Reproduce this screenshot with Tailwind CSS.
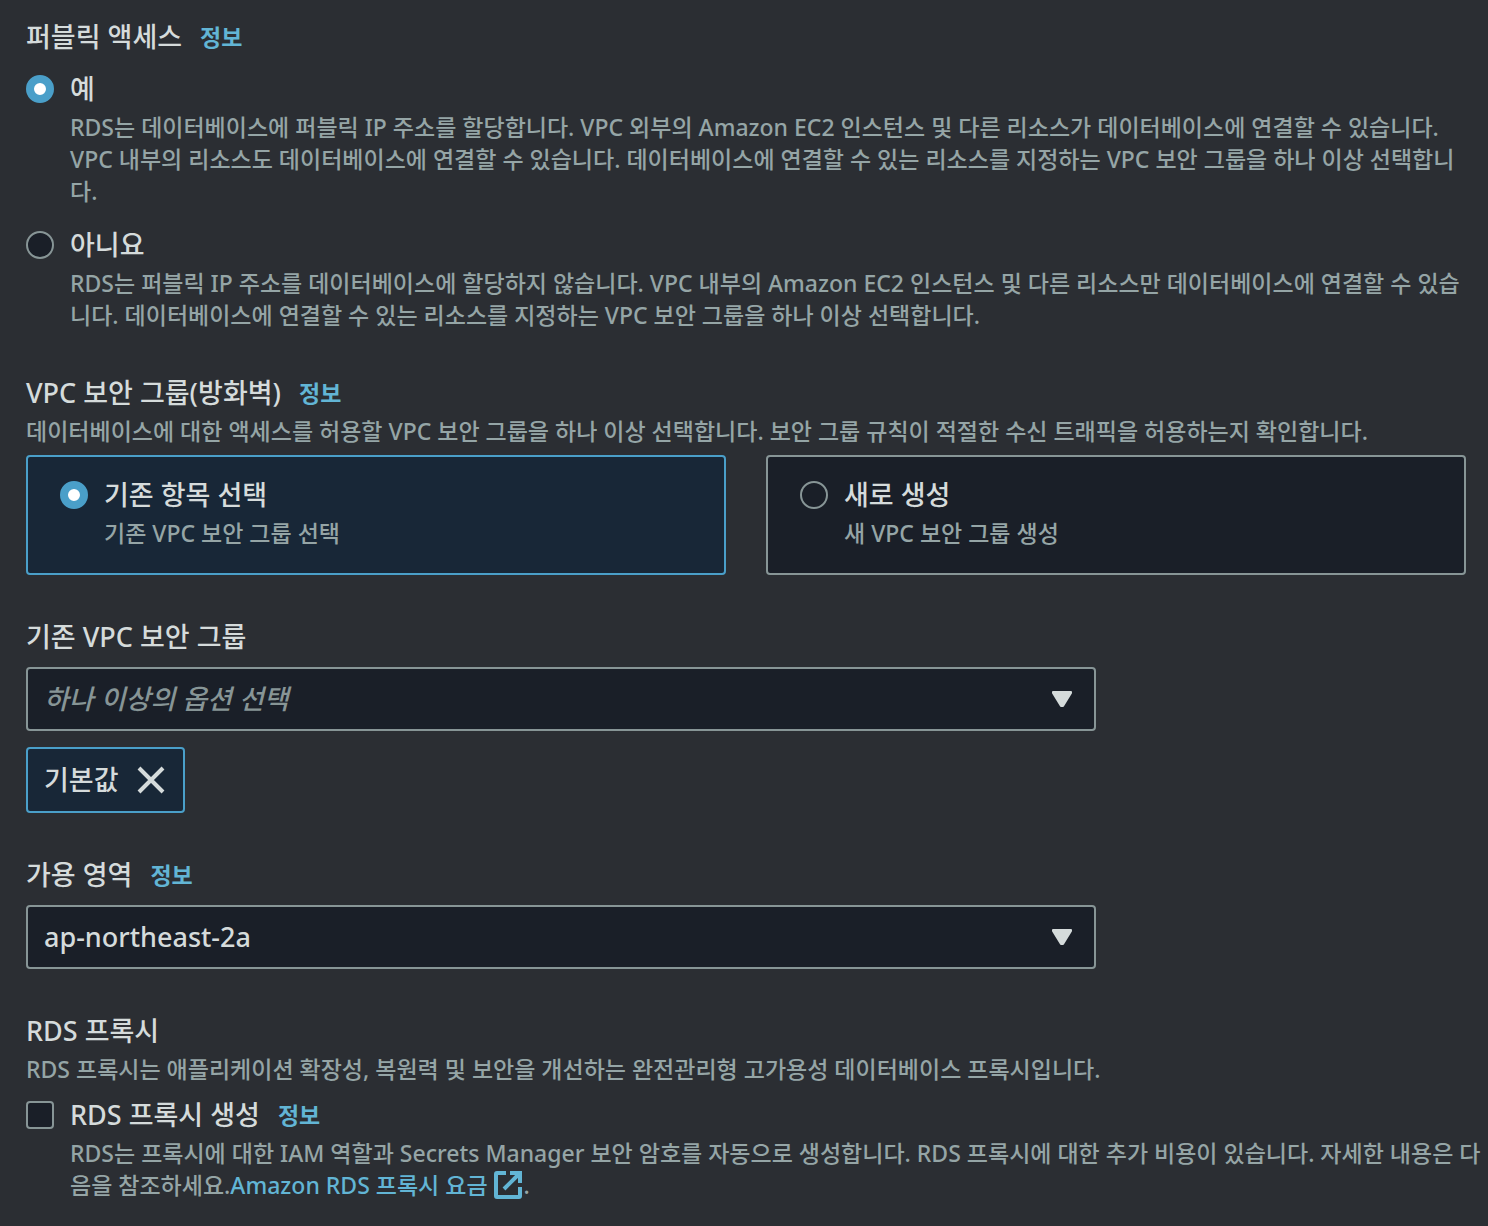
<!DOCTYPE html>
<html lang="ko">
<head>
    <meta charset="UTF-8">
    <meta name="viewport" content="width=device-width, initial-scale=1.0">
    <title>RDS 연결 설정</title>

    <!-- Tailwind CSS -->
    <script src="https://cdn.jsdelivr.net/npm/@tailwindcss/browser@4"></script>
</head>
<body class="bg-[#2b2e33] min-h-screen font-['Noto_Sans','Noto_Sans_CJK_KR',sans-serif] font-medium text-[27px] leading-10 text-[#d5dbdb]">
    <form class="flex flex-col gap-[42px] pt-[17px] pb-6 pl-[26px] pr-[22px]">

        <!-- Public access -->
        <fieldset>
            <legend class="flex items-center gap-[18px]">
                퍼블릭 액세스
                <a href="#" class="text-[23px] font-bold text-[#62b5d5]">정보</a>
            </legend>
            <div class="flex gap-4 mt-3">
                <input type="radio" id="public-yes" name="public-access" checked
                    class="appearance-none shrink-0 size-7 mt-[6px] rounded-full bg-[#1a1f28] border-2 border-[#879596] checked:bg-white checked:border-8 checked:border-[#4a9fc9]">
                <div>
                    <label for="public-yes">예</label>
                    <p class="mt-[2px] text-[23px] leading-8 whitespace-nowrap text-[#95a5a6]">
                        RDS는 데이터베이스에 퍼블릭 IP 주소를 할당합니다. VPC 외부의 Amazon EC2 인스턴스 및 다른 리소스가 데이터베이스에 연결할 수 있습니다.<br>
                        VPC 내부의 리소스도 데이터베이스에 연결할 수 있습니다. 데이터베이스에 연결할 수 있는 리소스를 지정하는 VPC 보안 그룹을 하나 이상 선택합니<br>다.
                    </p>
                </div>
            </div>
            <div class="flex gap-4 mt-[18px]">
                <input type="radio" id="public-no" name="public-access"
                    class="appearance-none shrink-0 size-7 mt-[6px] rounded-full bg-[#1a1f28] border-2 border-[#879596] checked:bg-white checked:border-8 checked:border-[#4a9fc9]">
                <div>
                    <label for="public-no">아니요</label>
                    <p class="mt-[2px] text-[23px] leading-8 whitespace-nowrap text-[#95a5a6]">
                        RDS는 퍼블릭 IP 주소를 데이터베이스에 할당하지 않습니다. VPC 내부의 Amazon EC2 인스턴스 및 다른 리소스만 데이터베이스에 연결할 수 있습<br>니다. 데이터베이스에 연결할 수 있는 리소스를 지정하는 VPC 보안 그룹을 하나 이상 선택합니다.
                    </p>
                </div>
            </div>
        </fieldset>

        <!-- VPC security group -->
        <fieldset>
            <legend class="flex items-center gap-[18px]">
                VPC 보안 그룹(방화벽)
                <a href="#" class="text-[23px] font-bold text-[#62b5d5]">정보</a>
            </legend>
            <p class="mt-[2px] text-[23px] leading-8 text-[#95a5a6]">데이터베이스에 대한 액세스를 허용할 VPC 보안 그룹을 하나 이상 선택합니다. 보안 그룹 규칙이 적절한 수신 트래픽을 허용하는지 확인합니다.</p>
            <div class="grid grid-cols-2 gap-10 mt-2">
                <div class="flex gap-4 pt-[18px] pb-6 px-8 border-2 rounded-sm border-[#4a9fc9] bg-[#182737]">
                    <input type="radio" id="sg-existing" name="sg" checked
                        class="appearance-none shrink-0 size-7 mt-[6px] rounded-full bg-[#1a1f28] border-2 border-[#879596] checked:bg-white checked:border-8 checked:border-[#4a9fc9]">
                    <div>
                        <label for="sg-existing">기존 항목 선택</label>
                        <p class="mt-[2px] text-[23px] leading-8 text-[#95a5a6]">기존 VPC 보안 그룹 선택</p>
                    </div>
                </div>
                <div class="flex gap-4 pt-[18px] pb-6 px-8 border-2 rounded-sm border-[#879596] bg-[#1a1f28]">
                    <input type="radio" id="sg-new" name="sg"
                        class="appearance-none shrink-0 size-7 mt-[6px] rounded-full bg-[#1a1f28] border-2 border-[#879596] checked:bg-white checked:border-8 checked:border-[#4a9fc9]">
                    <div>
                        <label for="sg-new">새로 생성</label>
                        <p class="mt-[2px] text-[23px] leading-8 text-[#95a5a6]">새 VPC 보안 그룹 생성</p>
                    </div>
                </div>
            </div>
        </fieldset>

        <!-- Existing security groups -->
        <div class="grid grid-cols-4 gap-x-10">
            <label for="sg-select" class="col-span-4">기존 VPC 보안 그룹</label>
            <div class="relative col-span-3 mt-[10px]">
                <select id="sg-select" class="appearance-none block w-full h-16 px-4 border-2 rounded-sm border-[#879596] bg-[#1a1f28] italic text-[#879596]">
                    <option>하나 이상의 옵션 선택</option>
                </select>
                <svg class="absolute right-6 top-6 w-5 h-4 pointer-events-none" viewBox="0 0 20 16" fill="#d5dbdb" stroke="#d5dbdb" stroke-width="2" stroke-linejoin="round">
                    <path d="M1 1h18v1l-8 13H9L1 2z"/>
                </svg>
            </div>
            <div class="col-span-4 flex mt-4">
                <div class="flex items-center gap-[18px] h-[66px] pl-4 pr-[18px] border-2 rounded-sm border-[#4a9fc9] bg-[#182737]">
                    기본값
                    <button type="button" aria-label="기본값 제거">
                        <svg class="block size-7" viewBox="0 0 28 28" fill="none" stroke="#d5dbdb" stroke-width="4">
                            <path d="M2 2l24 24M26 2L2 26"/>
                        </svg>
                    </button>
                </div>
            </div>
        </div>

        <!-- Availability zone -->
        <div class="grid grid-cols-4 gap-x-10">
            <div class="col-span-4 flex items-center gap-[18px]">
                <label for="az-select">가용 영역</label>
                <a href="#" class="text-[23px] font-bold text-[#62b5d5]">정보</a>
            </div>
            <div class="relative col-span-3 mt-[10px]">
                <select id="az-select" class="appearance-none block w-full h-16 px-4 border-2 rounded-sm border-[#879596] bg-[#1a1f28]">
                    <option>ap-northeast-2a</option>
                </select>
                <svg class="absolute right-6 top-6 w-5 h-4 pointer-events-none" viewBox="0 0 20 16" fill="#d5dbdb" stroke="#d5dbdb" stroke-width="2" stroke-linejoin="round">
                    <path d="M1 1h18v1l-8 13H9L1 2z"/>
                </svg>
            </div>
        </div>

        <!-- RDS Proxy -->
        <fieldset>
            <legend>RDS 프록시</legend>
            <p class="mt-[2px] text-[23px] leading-8 text-[#95a5a6]">RDS 프록시는 애플리케이션 확장성, 복원력 및 보안을 개선하는 완전관리형 고가용성 데이터베이스 프록시입니다.</p>
            <div class="flex gap-4 mt-[10px]">
                <input type="checkbox" id="proxy"
                    class="appearance-none shrink-0 size-7 mt-[6px] rounded-sm bg-[#1a1f28] border-2 border-[#879596] checked:bg-[#4a9fc9]">
                <div>
                    <div class="flex items-center gap-[18px]">
                        <label for="proxy">RDS 프록시 생성</label>
                        <a href="#" class="text-[23px] font-bold text-[#62b5d5]">정보</a>
                    </div>
                    <p class="mt-[2px] text-[23px] leading-8 whitespace-nowrap text-[#95a5a6]">
                        RDS는 프록시에 대한 IAM 역할과 Secrets Manager 보안 암호를 자동으로 생성합니다. RDS 프록시에 대한 추가 비용이 있습니다. 자세한 내용은 다<br>음을 참조하세요.<a href="#" class="text-[#62b5d5]">Amazon RDS 프록시 요금
                            <svg class="inline size-7 mr-[2px] align-[-5px]" viewBox="0 0 28 28" fill="none" stroke="currentColor" stroke-width="4">
                                <path d="M12 2H3q-1 0-1 1v22q0 1 1 1h22q1 0 1-1v-9M16 2h10v10M25 3L10 18"/>
                            </svg></a>.
                    </p>
                </div>
            </div>
        </fieldset>
    </form>
</body>
</html>
